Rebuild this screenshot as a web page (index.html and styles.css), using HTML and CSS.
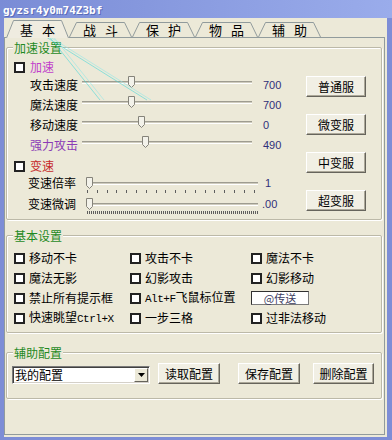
FILE: index.html
```html
<!DOCTYPE html>
<html lang="zh-CN">
<head>
    <meta charset="UTF-8">
    <meta name="viewport" content="width=device-width, initial-scale=1.0">
    <title>gyzsr4y0m74Z3bf</title>
    <link rel="stylesheet" href="styles.css">
</head>
<body>
    <div class="window">
        <div class="titlebar">gyzsr4y0m74Z3bf</div>

        <div class="client">
            <div class="tabs">
                <div class="tab tab-active">
                    <svg class="tab-shape" width="63" height="18" viewBox="0 0 63 18"><polygon points="0,18 7,0.5 56,0.5 63,18" fill="#efece0"/><polyline points="0.5,18 7.5,0.5 55.5,0.5 62.5,18" fill="none" stroke="#919b9c"/></svg>
                    <span class="tab-label">基 本</span>
                </div>
                <div class="tab">
                    <svg class="tab-shape" width="63" height="15" viewBox="0 0 63 15"><polyline points="0.5,15 7.5,0.5 55.5,0.5 62.5,15" fill="#ece9d8" stroke="#919b9c"/></svg>
                    <span class="tab-label">战 斗</span>
                </div>
                <div class="tab">
                    <svg class="tab-shape" width="63" height="15" viewBox="0 0 63 15"><polyline points="0.5,15 7.5,0.5 55.5,0.5 62.5,15" fill="#ece9d8" stroke="#919b9c"/></svg>
                    <span class="tab-label">保 护</span>
                </div>
                <div class="tab">
                    <svg class="tab-shape" width="63" height="15" viewBox="0 0 63 15"><polyline points="0.5,15 7.5,0.5 55.5,0.5 62.5,15" fill="#ece9d8" stroke="#919b9c"/></svg>
                    <span class="tab-label">物 品</span>
                </div>
                <div class="tab">
                    <svg class="tab-shape" width="63" height="15" viewBox="0 0 63 15"><polyline points="0.5,15 7.5,0.5 55.5,0.5 62.5,15" fill="#ece9d8" stroke="#919b9c"/></svg>
                    <span class="tab-label">辅 助</span>
                </div>
            </div>

            <div class="panel">
                <!-- 加速设置 -->
                <fieldset class="group group-speed">
                    <legend>加速设置</legend>
                    <div class="speed-body">
                        <div class="speed-left">
                            <label class="check check-row"><span class="box"></span><span class="pink">加速</span></label>

                            <div class="slider-row">
                                <span class="s-label">攻击速度</span>
                                <div class="track"><span class="thumb" style="left: 27%"><svg width="7" height="12" viewBox="0 0 7 12"><path d="M0.5 0.5H6.5V8.5L3.5 11.5L0.5 8.5Z" fill="#f3f2ea" stroke="#85837a"/></svg></span></div>
                                <span class="value">700</span>
                            </div>
                            <div class="slider-row">
                                <span class="s-label">魔法速度</span>
                                <div class="track"><span class="thumb" style="left: 27%"><svg width="7" height="12" viewBox="0 0 7 12"><path d="M0.5 0.5H6.5V8.5L3.5 11.5L0.5 8.5Z" fill="#f3f2ea" stroke="#85837a"/></svg></span></div>
                                <span class="value">700</span>
                            </div>
                            <div class="slider-row">
                                <span class="s-label">移动速度</span>
                                <div class="track"><span class="thumb" style="left: 33%"><svg width="7" height="12" viewBox="0 0 7 12"><path d="M0.5 0.5H6.5V8.5L3.5 11.5L0.5 8.5Z" fill="#f3f2ea" stroke="#85837a"/></svg></span></div>
                                <span class="value">0</span>
                            </div>
                            <div class="slider-row">
                                <span class="s-label purple">强力攻击</span>
                                <div class="track"><span class="thumb" style="left: 35%"><svg width="7" height="12" viewBox="0 0 7 12"><path d="M0.5 0.5H6.5V8.5L3.5 11.5L0.5 8.5Z" fill="#f3f2ea" stroke="#85837a"/></svg></span></div>
                                <span class="value">490</span>
                            </div>

                            <label class="check check-row check-shift"><span class="box"></span><span class="red">变速</span></label>

                            <div class="slider-row slider-small">
                                <span class="s-label">变速倍率</span>
                                <div class="track"><span class="thumb" style="left: 0%"><svg width="7" height="12" viewBox="0 0 7 12"><path d="M0.5 0.5H6.5V8.5L3.5 11.5L0.5 8.5Z" fill="#f3f2ea" stroke="#85837a"/></svg></span></div>
                                <span class="value">1</span>
                            </div>
                            <div class="ticks ticks-sparse"></div>

                            <div class="slider-row slider-small slider-fine">
                                <span class="s-label">变速微调</span>
                                <div class="track"><span class="thumb" style="left: 0%"><svg width="7" height="12" viewBox="0 0 7 12"><path d="M0.5 0.5H6.5V8.5L3.5 11.5L0.5 8.5Z" fill="#f3f2ea" stroke="#85837a"/></svg></span></div>
                                <span class="value value-fine">.00</span>
                            </div>
                            <div class="ticks ticks-dense"></div>
                        </div>

                        <div class="speed-buttons">
                            <button class="btn">普通服</button>
                            <button class="btn">微变服</button>
                            <button class="btn">中变服</button>
                            <button class="btn">超变服</button>
                        </div>
                    </div>
                </fieldset>

                <!-- 基本设置 -->
                <fieldset class="group group-basic">
                    <legend>基本设置</legend>
                    <div class="basic-grid">
                        <label class="check"><span class="box"></span><span>移动不卡</span></label>
                        <label class="check"><span class="box"></span><span>攻击不卡</span></label>
                        <label class="check"><span class="box"></span><span>魔法不卡</span></label>

                        <label class="check"><span class="box"></span><span>魔法无影</span></label>
                        <label class="check"><span class="box"></span><span>幻影攻击</span></label>
                        <label class="check"><span class="box"></span><span>幻影移动</span></label>

                        <label class="check"><span class="box"></span><span>禁止所有提示框</span></label>
                        <label class="check"><span class="box"></span><span><span class="mono">Alt+F</span>飞鼠标位置</span></label>
                        <div class="cell"><span class="field">@传送</span></div>

                        <label class="check"><span class="box"></span><span>快速眺望<span class="mono">Ctrl+X</span></span></label>
                        <label class="check"><span class="box"></span><span>一步三格</span></label>
                        <label class="check"><span class="box"></span><span>过非法移动</span></label>
                    </div>
                </fieldset>

                <!-- 辅助配置 -->
                <fieldset class="group group-config">
                    <legend>辅助配置</legend>
                    <div class="config-row">
                        <div class="combo">
                            <span class="combo-text">我的配置</span>
                            <span class="combo-btn"><svg width="7" height="4" viewBox="0 0 7 4"><path d="M0 0H7L3.5 4Z" fill="#000"/></svg></span>
                        </div>
                        <button class="btn btn-load">读取配置</button>
                        <button class="btn btn-save">保存配置</button>
                        <button class="btn btn-delete">删除配置</button>
                    </div>
                </fieldset>
            </div>
        </div>
    </div>

    <!-- 截图里残留的青色线 -->
    <svg class="glitch" width="160" height="110" viewBox="0 0 160 110">
        <line x1="36" y1="20" x2="100" y2="100" stroke="#3fd8d8" stroke-width="1"/>
        <line x1="40" y1="20" x2="104" y2="100" stroke="#8ee8e8" stroke-width="1"/>
        <line x1="19" y1="20" x2="147" y2="100" stroke="#3fd8d8" stroke-width="1"/>
        <line x1="23" y1="20" x2="151" y2="100" stroke="#8ee8e8" stroke-width="1"/>
    </svg>
</body>
</html>
```

FILE: styles.css
```css
body {
    margin: 0;
    font-family: "Noto Sans CJK SC", "Noto Sans", sans-serif;
    font-size: 12px;
    line-height: 14px;
    color: #000;
}

.window {
    width: 392px;
    height: 440px;
    box-sizing: border-box;
    padding: 0 5px 3px 4px;
    background: #7d8dd6;
    display: flex;
    flex-direction: column;
}

.titlebar {
    height: 15px;
    margin: 0 -5px 0 -4px;
    padding: 3px 0 0 3px;
    background: linear-gradient(to right, #7a8cd6, #9aaceb);
    color: #fff;
    font: bold 11px/16px "DejaVu Sans Mono", monospace;
    text-shadow: 1px 1px 0 #5a6cb8;
    overflow: hidden;
}

.client {
    flex: 1;
    background: #ece9d8;
    display: flex;
    flex-direction: column;
}

/* 选项卡 */
.tabs {
    height: 19px;
    padding-left: 2px;
    display: flex;
    align-items: flex-end;
}

.tab {
    position: relative;
    width: 63px;
    height: 15px;
}

.tab-active {
    height: 18px;
    margin-bottom: -1px;
    z-index: 1;
}

.tab-shape {
    position: absolute;
    left: 0;
    top: 0;
}

.tab-label {
    position: relative;
    display: block;
    padding-top: 1px;
    text-align: center;
    font-size: 13px;
    letter-spacing: 3px;
    text-indent: 3px;
}

.tab-active .tab-label {
    padding-top: 3px;
}

.panel {
    flex: 1;
    margin: 0 2px 2px 0;
    border: 1px solid #919b9c;
    padding: 3px 2px 0 1px;
    display: flex;
    flex-direction: column;
}

/* 分组框 */
.group {
    margin: 0;
    padding: 0 0 0 7px;
    min-width: 0;
    border: 1px solid #bcb9a8;
    border-radius: 2px;
    box-shadow: inset 1px 1px 0 #fff, 1px 1px 0 #fff;
}

.group legend {
    margin-left: -1px;
    padding: 0 1px;
    line-height: 13px;
    color: #1f8a1f;
    background: #ece9d8;
}

.group-basic {
    margin-top: 9px;
}

.group-config {
    margin-top: 13px;
}

/* 复选框 */
.check {
    display: flex;
    align-items: center;
    gap: 4px;
    white-space: nowrap;
}

.box {
    width: 7px;
    height: 7px;
    flex: none;
    background: #fff;
    border: 2px solid #222;
}

.check-row {
    height: 16px;
    gap: 5px;
}

.check-shift {
    height: 20px;
    margin-top: 1px;
}

.pink {
    color: #c13fcb;
}

.purple {
    color: #8b3cb6;
}

.red {
    color: #c62a2a;
}

.mono {
    font-family: "Liberation Mono", monospace;
    font-size: 11px;
    letter-spacing: -0.5px;
}

/* 加速设置 */
.speed-body {
    display: grid;
    grid-template-columns: 292px 60px;
    padding: 5px 0 5px 0;
}

.speed-left {
    display: flex;
    flex-direction: column;
}

.slider-row {
    height: 20px;
    padding-left: 16px;
    display: flex;
    align-items: center;
}

.s-label {
    width: 52px;
    flex: none;
    white-space: nowrap;
}

.track {
    position: relative;
    width: 170px;
    height: 20px;
    flex: none;
}

.track::before {
    content: "";
    position: absolute;
    left: 0;
    right: 0;
    top: 6px;
    height: 1px;
    border-top: 1px solid #9e9c90;
    border-bottom: 1px solid #fff;
    background: #cfccbe;
}

.thumb {
    position: absolute;
    top: 1px;
    line-height: 0;
}

.value {
    margin-left: 11px;
    font-family: "Liberation Sans", Arial, sans-serif;
    font-size: 11px;
    color: #30307a;
}

.slider-small {
    height: 14px;
    padding-left: 14px;
}

.slider-small .s-label {
    width: 58px;
}

.slider-small .track {
    width: 172px;
    height: 14px;
}

.slider-small .value {
    margin-left: 7px;
}

.slider-small .value-fine {
    margin-left: 4px;
}

.slider-fine {
    margin-top: 1px;
}

.ticks {
    height: 3px;
    margin-left: 73px;
}

.ticks-sparse {
    width: 168px;
    margin-bottom: 3px;
    background: repeating-linear-gradient(to right, #5e5e5e 0 1px, transparent 1px 9.8px);
}

.ticks-dense {
    width: 172px;
    background: repeating-linear-gradient(to right, #5e5e5e 0 1px, transparent 1px 2px);
}

.speed-buttons {
    padding-top: 17px;
    display: flex;
    flex-direction: column;
    gap: 17px;
}

/* 按钮 */
.btn {
    appearance: none;
    width: 60px;
    height: 21px;
    padding: 0;
    font-family: "Noto Sans CJK SC", sans-serif;
    font-size: 12px;
    line-height: 14px;
    color: #000;
    -webkit-text-fill-color: #000;
    background: #f1efe4;
    border: 1px solid;
    border-color: #fff #66645c #66645c #fff;
    box-shadow: inset -1px -1px 0 #aca899;
    cursor: pointer;
}

/* 基本设置 */
.basic-grid {
    display: grid;
    grid-template-columns: 116px 121px 1fr;
    grid-auto-rows: 20px;
    padding: 6px 0 4px;
}

.cell {
    display: flex;
    align-items: center;
}

.field {
    width: 56px;
    height: 12px;
    line-height: 12px;
    text-align: center;
    background: #fff;
    border: 1px solid;
    border-color: #303030 #7a7a7a #7a7a7a #303030;
    color: #3c3c5e;
    font-size: 11px;
}

/* 辅助配置 */
.config-row {
    display: flex;
    align-items: flex-end;
    padding: 4px 0 14px;
    margin-left: -2px;
}

.combo {
    width: 134px;
    height: 14px;
    display: flex;
    align-items: center;
    background: #fff;
    border: 1px solid;
    border-color: #7a7a7a #fff #fff #7a7a7a;
    box-shadow: inset 1px 1px 0 #404040, inset -1px -1px 0 #d4d0c8;
    padding: 1px;
}

.combo-text {
    flex: 1;
    padding-left: 1px;
}

.combo-btn {
    width: 12px;
    height: 12px;
    display: flex;
    align-items: center;
    justify-content: center;
    background: #ece9d8;
    border: 1px solid;
    border-color: #fff #66645c #66645c #fff;
}

.btn-load {
    width: 62px;
    margin-left: 8px;
}

.btn-save {
    width: 62px;
    margin-left: 18px;
}

.btn-delete {
    width: 61px;
    margin-left: 13px;
}

.glitch {
    position: absolute;
    left: 0;
    top: 0;
    opacity: 0.55;
    pointer-events: none;
}
```
